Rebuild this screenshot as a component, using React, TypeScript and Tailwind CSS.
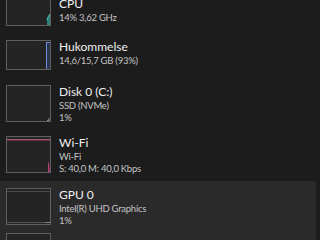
import React from "react";

type Row = {
  title: string;
  lines: string[];
  boxH: number;
  rowH: number;
  graph: React.ReactNode;
  selected?: boolean;
};

const W = 45;

function Box({ h, children }: { h: number; children: React.ReactNode }) {
  return (
    <div
      className="relative shrink-0 border border-[#5f5f5f] bg-[#242424]"
      style={{ width: W, height: h }}
    >
      <svg className="absolute inset-0" width={W - 2} height={h - 2}>
        {children}
      </svg>
    </div>
  );
}

const rows: Row[] = [
  {
    title: "CPU",
    lines: ["14% 3,62 GHz"],
    boxH: 29,
    rowH: 43,
    graph: (
      <>
        <path d="M40 27 L40 22 L41 19 L43 16 L43 27 Z" fill="#2f7f7a" />
        <path d="M40 22 L41 19 L43 16" stroke="#4fc1b8" strokeWidth="1" fill="none" />
      </>
    ),
  },
  {
    title: "Hukommelse",
    lines: ["14,6/15,7 GB (93%)"],
    boxH: 30,
    rowH: 45,
    graph: (
      <>
        <rect x="39" y="1" width="4" height="27" fill="#2c3550" />
        <line x1="39.5" y1="1" x2="39.5" y2="28" stroke="#6a8fd8" strokeWidth="1" />
        <line x1="39" y1="1.5" x2="43" y2="1.5" stroke="#6a8fd8" strokeWidth="1" />
      </>
    ),
  },
  {
    title: "Disk 0 (C:)",
    lines: ["SSD (NVMe)", "1%"],
    boxH: 37,
    rowH: 51,
    graph: (
      <path d="M40 34.5 L42 34.5 L42 32" stroke="#7fa07a" strokeWidth="1" fill="none" />
    ),
  },
  {
    title: "Wi-Fi",
    lines: ["Wi-Fi", "S: 40,0 M: 40,0 Kbps"],
    boxH: 37,
    rowH: 52,
    graph: (
      <>
        <line x1="0" y1="2.5" x2="43" y2="2.5" stroke="#a8506f" strokeWidth="1" />
        <line x1="0" y1="3.5" x2="43" y2="3.5" stroke="#5a3442" strokeWidth="1" />
        <path d="M41 35 L41 24 L42 27 L43 35 Z" fill="#b33f78" />
      </>
    ),
  },
  {
    title: "GPU 0",
    lines: ["Intel(R) UHD Graphics", "1%"],
    boxH: 37,
    rowH: 45,
    selected: true,
    graph: (
      <>
        <line x1="0" y1="2.5" x2="43" y2="2.5" stroke="#4a4a4a" strokeWidth="1" />
        <line x1="0" y1="33.5" x2="43" y2="33.5" stroke="#555555" strokeWidth="1" />
        <line x1="39" y1="33.5" x2="43" y2="33.5" stroke="#8a8a8a" strokeWidth="1" />
      </>
    ),
  },
  {
    title: "",
    lines: [],
    boxH: 37,
    rowH: 52,
    selected: true,
    graph: null,
  },
];

export default function App() {
  return (
    <div
      className="w-[320px] h-[240px] overflow-hidden bg-[#1c1c1c]"
      style={{ fontFamily: 'Lato, "Noto Sans", sans-serif' }}
    >
      <div className="flex flex-col mt-[-10px]">
        {rows.map((r, i) => {
          const sel = r.selected;
          return (
            <div
              key={i}
              className={`flex w-[316px] pt-[7px] ${sel ? "bg-[#2a2a2a]" : ""}`}
              style={{ height: r.rowH }}
            >
              <div className="flex pl-[6px] gap-[8px]">
                <Box h={r.boxH}>{r.graph}</Box>
                <div className="flex flex-col mt-[-1px]">
                  {r.title && (
                    <div className="text-[12px] leading-[16px] text-[#f0f0f0]">{r.title}</div>
                  )}
                  {r.lines.map((l, j) => (
                    <div
                      key={j}
                      className="text-[9.5px] leading-[12px] tracking-[-0.25px] text-[#c4c4c4] whitespace-pre"
                    >
                      {l}
                    </div>
                  ))}
                </div>
              </div>
            </div>
          );
        })}
      </div>
    </div>
  );
}
